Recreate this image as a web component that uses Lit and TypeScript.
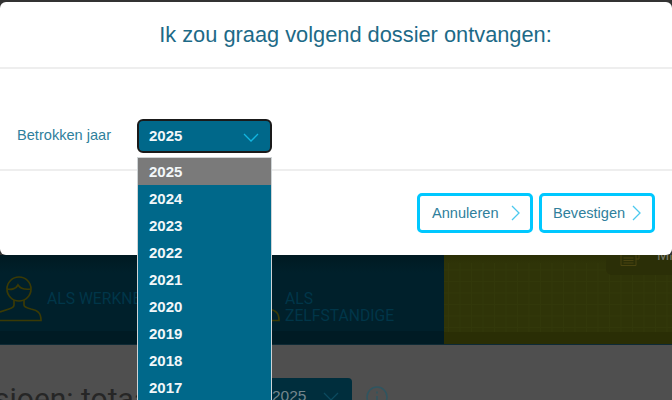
import { LitElement, html, css } from 'lit';
import { customElement } from 'lit/decorators.js';

const YEARS = [2025, 2024, 2023, 2022, 2021, 2020, 2019, 2018, 2017, 2016];

@customElement('app-root')
export class AppRoot extends LitElement {
  static styles = css`
    :host {
      display: block;
      position: relative;
      width: 672px;
      height: 400px;
      overflow: hidden;
      background: #4f4f4f;
      font-family: 'Liberation Sans', Arial, sans-serif;
    }

    /* dimmed page behind the modal */
    .page-top {
      height: 255px;
      background: #333;
    }
    .banner {
      display: flex;
      height: 90px;
      border-bottom: 1px solid #0e2a35;
      box-sizing: border-box;
      font-family: Roboto, sans-serif;
    }
    .banner-left {
      width: 444px;
      flex: none;
      background: linear-gradient(#001a22, #00202b 20%, #00202b 85%, #001b24 85%);
      display: flex;
      align-items: flex-start;
      box-sizing: border-box;
      color: #003649;
      font-size: 15.7px;
      line-height: 17px;
    }
    .person { flex: none; margin-top: 21px; }
    .als-werknemer { margin: 35px 0 0 5px; width: 191px; flex: none; white-space: nowrap; }
    .als-zelf { margin: 35px 0 0 5px; }
    .banner-right {
      flex: 1;
      position: relative;
      background-color: #2f3408;
      background-image:
        linear-gradient(#2a2e05, #2a2e05),
        linear-gradient(#2a2e05, #2f3408),
        linear-gradient(#32380a 1px, transparent 1px),
        linear-gradient(90deg, #32380a 1px, transparent 1px);
      background-size: 100% 12px, 100% 8px, 11.500px 11.500px, 11.500px 11.500px;
      background-position: 0 100%, 0 0, 4px 3px, 4px 3px;
      background-repeat: no-repeat, no-repeat, repeat, repeat;
    }
    .tab {
      position: absolute;
      right: 0;
      top: 0;
      width: 66px;
      height: 20px;
      border-radius: 0 0 0 6px;
      background: #2b2f07;
      overflow: hidden;
    }
    .tab svg { position: absolute; left: 14px; top: 0; }
    .tab span {
      position: absolute;
      left: 51px;
      top: -8px;
      font-size: 14px;
      line-height: 16px;
      color: #77786a;
    }
    .content {
      display: flex;
      align-items: flex-start;
      height: 55px;
      box-sizing: border-box;
      color: #262626;
    }
    .heading {
      width: 261px;
      flex: none;
      margin-top: 38px;
      margin-left: -6px;
      padding-right: 6px;
      box-sizing: content-box;
      white-space: nowrap;
      font-family: Roboto, sans-serif;
      font-size: 30px;
      line-height: 32px;
    }
    .mini-select {
      display: flex;
      flex: none;
      align-items: center;
      justify-content: space-between;
      width: 91px;
      height: 40px;
      margin-top: 33px;
      padding: 0 13px 4px 11px;
      box-sizing: border-box;
      background: #002e3d;
      border-radius: 4px;
      color: #74868d;
      font-size: 15.500px;
    }
    .info { margin: 41px 0 0 14px; flex: none; }

    /* modal */
    .modal {
      position: absolute;
      left: 0;
      top: 2px;
      width: 672px;
      height: 253px;
      background: #fff;
      border-radius: 6px;
      display: flex;
      flex-direction: column;
    }
    .modal-head {
      height: 67px;
      flex: none;
      border-bottom: 2px solid #eeeeee;
      box-sizing: border-box;
      display: flex;
      justify-content: center;
      align-items: center;
      padding-left: 39px;
      color: #1d6a87;
      font-size: 21.8px;
    }
    .modal-body {
      height: 102px;
      flex: none;
      box-sizing: border-box;
      border-bottom: 2px solid #eeeeee;
      display: flex;
      align-items: flex-start;
      padding: 50px 0 0 17px;
    }
    .field-label {
      width: 120px;
      flex: none;
      color: #2f7f9c;
      font-size: 14.6px;
      line-height: 33px;
    }
    .select {
      width: 135px;
      height: 34px;
      box-sizing: border-box;
      border: 2px solid #1a1a1a;
      border-radius: 6px;
      background: #00688a;
      color: #f2f7f9;
      font-size: 15px;
      font-weight: 700;
      display: flex;
      align-items: center;
      justify-content: space-between;
      padding: 0 11px 2px 10px;
    }
    .select svg { margin-top: 4px; }
    .modal-foot {
      flex: 1;
      display: flex;
      justify-content: flex-end;
      gap: 6px;
      padding: 22px 17px 0 0;
    }
    .btn {
      width: 116px;
      height: 40px;
      box-sizing: border-box;
      border: 3px solid #00c8ff;
      border-radius: 5px;
      background: #fff;
      color: #2f7f9c;
      font-size: 14.6px;
      display: flex;
      align-items: center;
      justify-content: space-between;
      padding: 0 11px;
    }
    .btn.cancel { padding: 0 10px 0 12px; }

    /* opened year list, lies over the modal */
    .list {
      position: absolute;
      left: 137px;
      top: 157px;
      width: 135px;
      box-sizing: border-box;
      border: 1px solid #cfd4d6;
      background: #00688a;
      color: #f2f7f9;
      font-size: 15px;
      font-weight: 700;
    }
    .item {
      height: 27px;
      line-height: 28px;
      padding-left: 11px;
    }
    .item.current { background: #7a7a7a; }
  `;

  render() {
    return html`
      <div class="page-top"></div>
      <div class="banner">
        <div class="banner-left">
          ${this.person()}
          <div class="als-werknemer">ALS WERKNEMER</div>
          ${this.person()}
          <div class="als-zelf">ALS<br />ZELFSTANDIGE</div>
        </div>
        <div class="banner-right">
          <div class="tab">
            <svg width="22" height="12" viewBox="0 0 22 12" fill="none" stroke="#4a4410" stroke-width="1">
              <path d="M1 0v10.500h15V0M3.500 3h10M3.500 5.500h10M3.500 8h10M16 4h3V0" />
            </svg>
            <span>Mi</span>
          </div>
        </div>
      </div>
      <div class="content">
        <div class="heading">sioen: totaal</div>
        <div class="mini-select">
          <span>2025</span>
          <svg width="16" height="9" viewBox="0 0 16 9" fill="none" stroke="#0b4a5e" stroke-width="1.300"><path d="M1 1l7 7 7-7" /></svg>
        </div>
        <svg class="info" width="22" height="22" viewBox="0 0 22 22" fill="none" stroke="#2f5560" stroke-width="1.500">
          <circle cx="11" cy="11" r="10" />
          <path d="M11 10v7M11 5.500v2" />
        </svg>
      </div>

      <div class="modal">
        <div class="modal-head">Ik zou graag volgend dossier ontvangen:</div>
        <div class="modal-body">
          <div class="field-label">Betrokken jaar</div>
          <div class="select">
            <span>2025</span>
            <svg width="16" height="9" viewBox="0 0 16 9" fill="none" stroke="#12b5e0" stroke-width="1.300"><path d="M1 1l7 7 7-7" /></svg>
          </div>
        </div>
        <div class="modal-foot">
          <div class="btn cancel">Annuleren ${this.chevron()}</div>
          <div class="btn">Bevestigen ${this.chevron()}</div>
        </div>
      </div>

      <div class="list">
        ${YEARS.map((y, i) => html`<div class="item ${i === 0 ? 'current' : ''}">${y}</div>`)}
      </div>
    `;
  }

  person() {
    return html`<svg class="person" width="42" height="46" viewBox="0 0 42 46" fill="none" stroke="#3a3a05" stroke-width="1.700">
      <circle cx="19" cy="13" r="12" />
      <path d="M7 13c4 1 9 0 11-4 2 3 6 5 13 4" />
      <path d="M14 24v5c0 2-2 3-5 4l-9 3M24 24v5c0 2 3 3 7 4 7 1.500 10 4 10 11.500H0" />
    </svg>`;
  }

  chevron() {
    return html`<svg width="9" height="16" viewBox="0 0 9 16" fill="none" stroke="#4cc9ee" stroke-width="1.300"><path d="M1 1l7 7-7 7" /></svg>`;
  }
}
